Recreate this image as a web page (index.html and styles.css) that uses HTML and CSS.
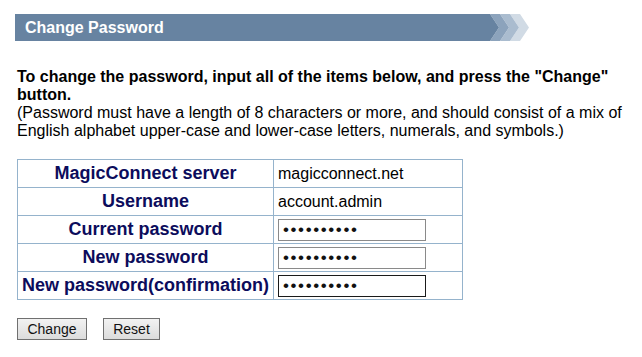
FILE: index.html
```html
<!DOCTYPE html>
<html>
<head>
<meta charset="utf-8">
<link rel="stylesheet" href="styles.css">
</head>
<body>
<div class="header">
  <div class="header-bar">Change Password</div>
  <svg class="chevrons" width="40" height="27" viewBox="0 0 40 27">
    <polygon points="20,0 30,0 39,13.5 30,27 20,27 29,13.5" fill="#d1dbe5"/>
    <polygon points="10,0 20,0 29,13.5 20,27 10,27 19,13.5" fill="#aabccf"/>
    <polygon points="0,0 10,0 19,13.5 10,27 0,27 9,13.5" fill="#8ca3bc"/>
    <polygon points="0,0 9,13.5 0,27" fill="#6783a1"/>
  </svg>
</div>
<div class="intro">
  <p class="lead">To change the password, input all of the items below, and press the "Change" button.</p>
  <p class="note">(Password must have a length of 8 characters or more, and should consist of a mix of English alphabet upper-case and lower-case letters, numerals, and symbols.)</p>
</div>
<table class="form-table">
  <tr><th>MagicConnect server</th><td>magicconnect.net</td></tr>
  <tr><th>Username</th><td>account.admin</td></tr>
  <tr><th>Current password</th><td><input class="pw" type="password" value="abcdefghij"></td></tr>
  <tr><th>New password</th><td><input class="pw" type="password" value="abcdefghij"></td></tr>
  <tr><th>New password(confirmation)</th><td><input class="pw pw-focus" type="password" value="abcdefghij"></td></tr>
</table>
<div class="actions">
  <button class="btn btn-change">Change</button>
  <button class="btn btn-reset">Reset</button>
</div>
</body>
</html>
```
FILE: styles.css
```css
html, body {
  margin: 0;
  padding: 0;
  background: #ffffff;
}
body {
  font-family: "Liberation Sans", Arial, sans-serif;
  color: #000;
}
.header {
  display: flex;
  margin: 14px 0 0 15px;
  height: 27px;
}
.header-bar {
  width: 465px;
  background: #6783a1;
  color: #fff;
  font-weight: bold;
  font-size: 16px;
  line-height: 27px;
  padding-left: 10px;
}
.chevrons {
  display: block;
}
.intro {
  margin: 27px 0 0 17px;
  width: 620px;
  font-size: 16px;
  line-height: 18px;
}
.intro p {
  margin: 0;
}
.lead {
  font-weight: bold;
}
.form-table {
  margin: 19px 0 0 17px;
  border-collapse: collapse;
  width: 446px;
}
.form-table th,
.form-table td {
  border: 1px solid #95b3cc;
  height: 27px;
  padding: 0 2px;
  font-size: 16px;
}
.form-table th {
  color: #0c0c5c;
  text-align: center;
  white-space: nowrap;
  font-size: 18px;
  width: 251px;
}
.form-table td {
  text-align: left;
  padding-left: 4px;
}
.pw {
  box-sizing: border-box;
  width: 148px;
  height: 22px;
  border: 1px solid #8a8a8a;
  padding: 0 4px;
  margin: 0;
  font-size: 17px;
  letter-spacing: 1.6px;
  color: #111;
  font-family: "Liberation Sans", Arial, sans-serif;
  vertical-align: middle;
}
.pw-focus {
  border: 1px solid #1a1a1a;
}
.actions {
  display: flex;
  gap: 16px;
  margin: 18px 0 0 17px;
}
.btn {
  font-family: "Liberation Sans", Arial, sans-serif;
  font-size: 14px;
  height: 22px;
  padding: 0;
  border: 1px solid #707070;
  background: linear-gradient(#f2f2f2, #dcdcdc);
  color: #111;
}
.btn-change {
  width: 70px;
}
.btn-reset {
  width: 57px;
}
```
